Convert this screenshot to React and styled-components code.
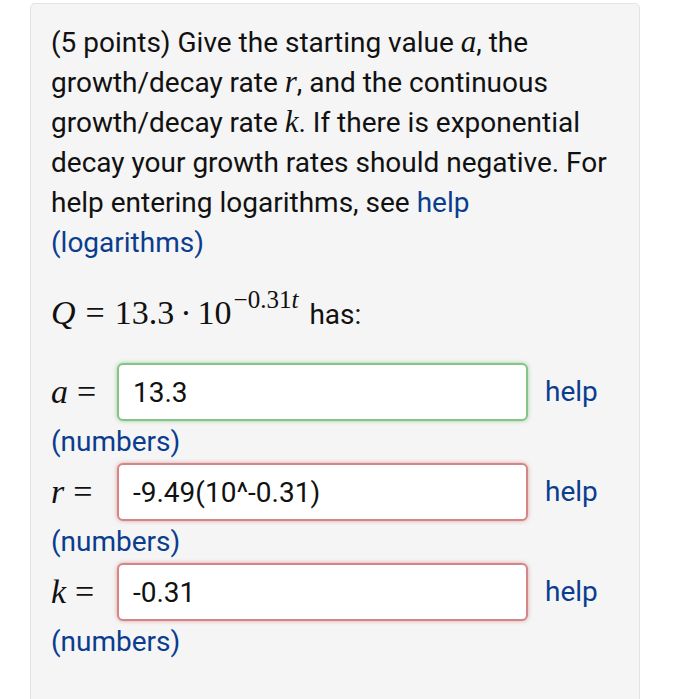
import styled, { createGlobalStyle } from "styled-components";

const GlobalStyle = createGlobalStyle`
  html, body {
    margin: 0;
    padding: 0;
    background: #ffffff;
  }
  body {
    font-family: Roboto, "Liberation Sans", sans-serif;
    color: #111111;
  }
`;

const Page = styled.div`
  padding: 3px 0 0 30px;
  height: 699px;
  overflow: hidden;
  box-sizing: border-box;
`;

const Card = styled.section`
  width: 610px;
  min-height: 760px;
  box-sizing: border-box;
  background: #f5f5f5;
  border: 1px solid #e3e3e3;
  border-radius: 5px;
  padding: 19px 20px 0 20px;
  font-size: 28px;
  line-height: 40px;
`;

const Prompt = styled.p`
  margin: 0;
  height: 240px;
`;

const Link = styled.a`
  color: #0b3d8f;
  text-decoration: none;
  cursor: pointer;
`;

const MathVar = styled.span`
  font-family: "Liberation Serif", "DejaVu Serif", serif;
  font-style: italic;
  font-size: ${(p) => p.$size || 34}px;
  line-height: 1;
`;

const MathText = styled.span`
  font-family: "Liberation Serif", "DejaVu Serif", serif;
  font-size: 34px;
`;

const Formula = styled.div`
  margin-top: 30px;
  height: 40px;
  display: flex;
  align-items: baseline;
  white-space: pre;
`;

const Sup = styled.span`
  font-family: "Liberation Serif", "DejaVu Serif", serif;
  font-size: 25px;
  position: relative;
  top: -16px;
  margin-left: 2px;
`;

const Op = styled.span`
  font-family: "Liberation Serif", "DejaVu Serif", serif;
  font-size: 34px;
  margin: 0 ${(p) => p.$space || 8}px;
`;

const Has = styled.span`
  margin-left: 11px;
`;

const Answers = styled.div`
  margin-top: 29px;
  display: flex;
  flex-direction: column;
`;

const Answer = styled.div`
  display: flex;
  flex-direction: column;
`;

const Row = styled.div`
  display: flex;
  align-items: center;
  height: 60px;
`;

const Label = styled.label`
  width: 66px;
  flex: none;
  display: flex;
  align-items: baseline;
`;

const Field = styled.input`
  width: 411px;
  height: 58px;
  box-sizing: border-box;
  flex: none;
  margin: 0;
  padding: 0 0 0 14px;
  font-family: Roboto, "Liberation Sans", sans-serif;
  font-size: 28px;
  color: #111;
  background: #ffffff;
  border-radius: 6px;
  border: 2px solid ${(p) => (p.$ok ? "#86c386" : "#d48686")};
  box-shadow: 0 0 4px
    ${(p) => (p.$ok ? "rgba(100, 180, 100, 0.6)" : "rgba(210, 110, 110, 0.6)")};
  outline: none;
`;

const HelpLink = styled(Link)`
  margin-left: 17px;
`;

const NumbersLine = styled.div`
  height: 40px;
`;

const answers = [
  { name: "a", value: "13.3", ok: true },
  { name: "r", value: "-9.49(10^-0.31)", ok: false },
  { name: "k", value: "-0.31", ok: false },
];

export default function App() {
  return (
    <>
      <GlobalStyle />
      <Page>
        <Card>
          <Prompt>
            (5 points) Give the starting value <MathVar $size={31}>a</MathVar>,
            the growth/decay rate <MathVar $size={31}>r</MathVar>, and the
            continuous growth/decay rate <MathVar $size={31}>k</MathVar>. If
            there is exponential decay your growth rates should negative. For
            help entering logarithms, see <Link>help (logarithms)</Link>
          </Prompt>

          <Formula>
            <MathVar>Q</MathVar>
            <Op $space={10}>=</Op>
            <MathText>13.3</MathText>
            <Op $space={6}>·</Op>
            <MathText>10</MathText>
            <Sup>
              −0.31<i>t</i>
            </Sup>
            <Has>has:</Has>
          </Formula>

          <Answers>
            {answers.map((a) => (
              <Answer key={a.name}>
                <Row>
                  <Label>
                    <MathVar>{a.name}</MathVar>
                    <Op $space={9}>=</Op>
                  </Label>
                  <Field defaultValue={a.value} $ok={a.ok} />
                  <HelpLink>help</HelpLink>
                </Row>
                <NumbersLine>
                  <Link>(numbers)</Link>
                </NumbersLine>
              </Answer>
            ))}
          </Answers>
        </Card>
      </Page>
    </>
  );
}
